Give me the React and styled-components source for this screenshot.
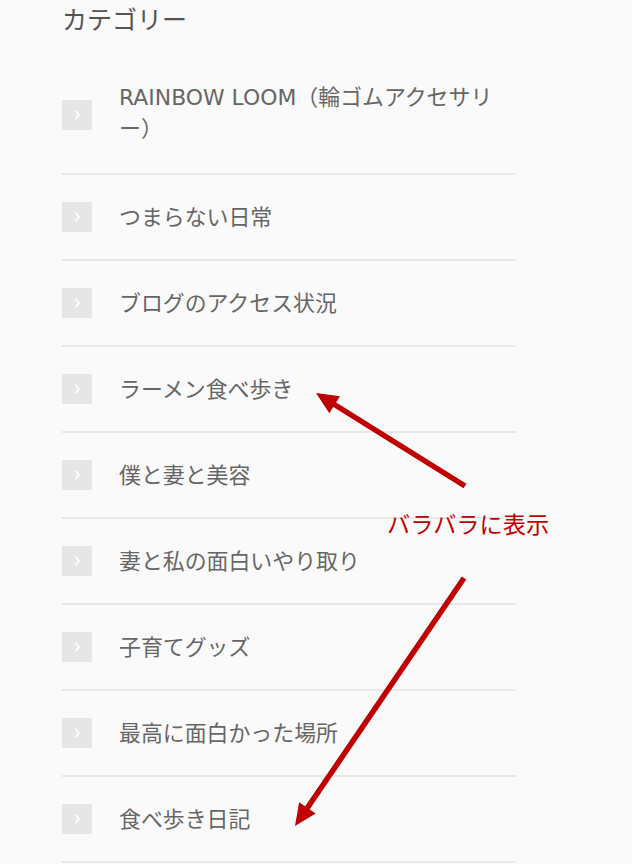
import React from "react";
import styled, { createGlobalStyle } from "styled-components";

const Global = createGlobalStyle`
  html, body { margin: 0; padding: 0; background: #fafafa; }
  body { font-family: "DejaVu Sans", "Noto Sans CJK JP", sans-serif; }
`;

const Page = styled.div`
  position: relative;
  width: 632px;
  height: 864px;
  overflow: hidden;
  background: #fafafa;
  padding-left: 62px;
  box-sizing: border-box;
`;

const Title = styled.h2`
  margin: 0;
  font-family: "Noto Sans CJK JP", sans-serif;
  font-weight: 400;
  font-size: 25px;
  line-height: 36px;
  color: #555;
`;

const List = styled.ul`
  list-style: none;
  margin: 22px 0 0;
  padding: 0;
  width: 454px;
`;

const Item = styled.li`
  display: flex;
  align-items: center;
  gap: 27px;
  padding: ${(p) => (p.$tall ? "24px 0 29px" : "0")};
  height: ${(p) => (p.$tall ? "auto" : "84px")};
  border-bottom: 2px solid #e8e8e8;
`;

const IconBox = styled.span`
  flex: 0 0 30px;
  width: 30px;
  height: 30px;
  background: #e6e6e6;
  display: flex;
  align-items: center;
  justify-content: center;
  align-self: center;
  margin-top: ${(p) => (p.$shift ? "4px" : "0")};
`;

const Label = styled.span`
  font-family: "DejaVu Sans", "Noto Sans CJK JP", sans-serif;
  font-size: 21.9px;
  line-height: 31px;
  color: #666;
  max-width: 392px;
  line-break: normal;
`;

const Overlay = styled.svg`
  position: absolute;
  left: 0;
  top: 0;
  pointer-events: none;
`;

const Note = styled.div`
  position: absolute;
  left: 387px;
  top: 507px;
  font-family: "Noto Sans CJK JP", sans-serif;
  font-size: 23.2px;
  line-height: 32px;
  color: #c00000;
  white-space: nowrap;
`;

const Chevron = () => (
  <svg width="10" height="12" viewBox="0 0 10 12">
    <path d="M3.3 1.8 L7 6 L3.3 10.2" fill="none" stroke="#fff" strokeWidth="1.7" />
  </svg>
);

const items = [
  "RAINBOW LOOM（輪ゴムアクセサリー）",
  "つまらない日常",
  "ブログのアクセス状況",
  "ラーメン食べ歩き",
  "僕と妻と美容",
  "妻と私の面白いやり取り",
  "子育てグッズ",
  "最高に面白かった場所",
  "食べ歩き日記",
];

function arrowHead(x1, y1, x2, y2, len, half) {
  const dx = x2 - x1;
  const dy = y2 - y1;
  const d = Math.hypot(dx, dy);
  const ux = dx / d;
  const uy = dy / d;
  const bx = x2 - ux * len;
  const by = y2 - uy * len;
  const px = -uy * half;
  const py = ux * half;
  return `${x2},${y2} ${bx + px},${by + py} ${bx - px},${by - py}`;
}

const arrows = [
  { x1: 465, y1: 486, x2: 316, y2: 393 },
  { x1: 464, y1: 578, x2: 295, y2: 826 },
];

export default function App() {
  return (
    <>
      <Global />
      <Page>
        <Title>カテゴリー</Title>
        <List>
          {items.map((t, i) => (
            <Item key={t} $tall={i === 0}>
              <IconBox $shift={i === 0}>
                <Chevron />
              </IconBox>
              <Label>{t}</Label>
            </Item>
          ))}
        </List>
        <Overlay width="632" height="864" viewBox="0 0 632 864">
          {arrows.map((a, i) => {
            const dx = a.x2 - a.x1;
            const dy = a.y2 - a.y1;
            const d = Math.hypot(dx, dy);
            const ex = a.x2 - (dx / d) * 16;
            const ey = a.y2 - (dy / d) * 16;
            return (
              <g key={i}>
                <line x1={a.x1} y1={a.y1} x2={ex} y2={ey} stroke="#c00000" strokeWidth="5.5" />
                <polygon points={arrowHead(a.x1, a.y1, a.x2, a.y2, 22, 10)} fill="#c00000" />
              </g>
            );
          })}
        </Overlay>
        <Note>バラバラに表示</Note>
      </Page>
    </>
  );
}
